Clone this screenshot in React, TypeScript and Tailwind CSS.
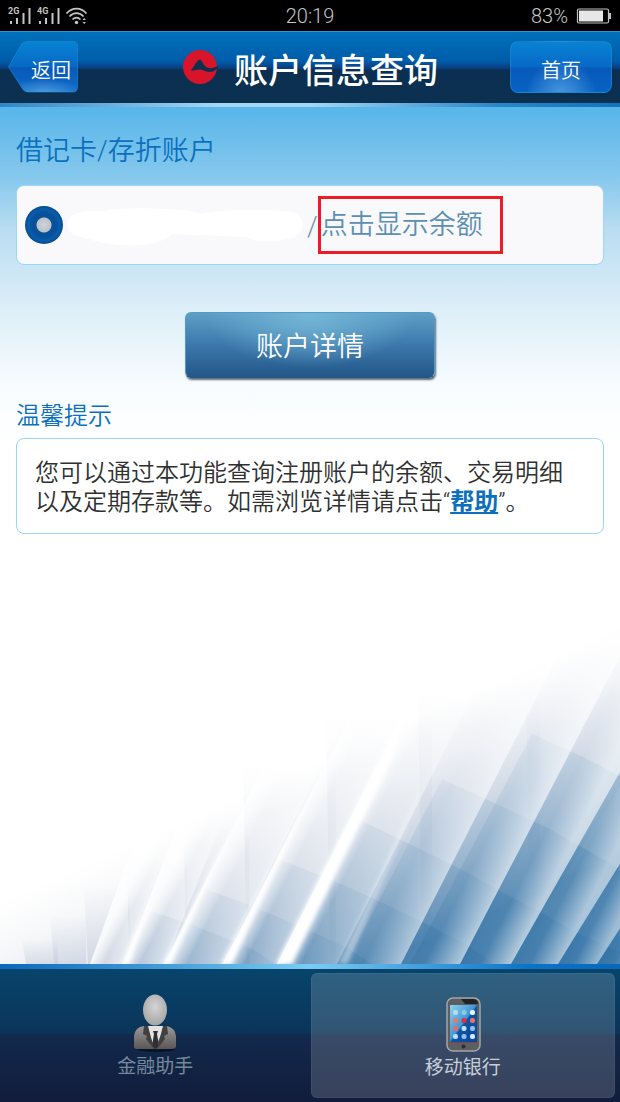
import type { ReactNode } from 'react'

// Slanted strips of the wallpaper: bottom edge x, top edge x/y, opacity of the white fold
const strips = [
    { x: 90, tx: 128, ty: 240, w: 34, fold: 0.6 },
    { x: 123, tx: 170, ty: 227, w: 42, fold: 0.6 },
    { x: 164, tx: 237, ty: 200, w: 58, fold: 0.5 },
    { x: 222, tx: 318, ty: 160, w: 56, fold: 0.45 },
    { x: 277, tx: 399, ty: 103, w: 60, fold: 0.35 },
    { x: 336, tx: 452, ty: 117, w: 65, fold: 0.55 },
    { x: 400, tx: 531, ty: 93, w: 60, fold: 0.6 },
    { x: 459, tx: 602, ty: 93, w: 52, fold: 0.6 },
    { x: 510, tx: 666, ty: 93, w: 48, fold: 0.55 },
    { x: 557, tx: 720, ty: 93, w: 40, fold: 0.5 },
    { x: 597, tx: 760, ty: 93, w: 40, fold: 0.4 },
]

const rows = [
    'M532 115 L581 137 L620 157 V345 H410 Z',
    'M442 160 L490 182 L544 207 L585 230 L620 250 V345 H346 Z',
    'M358 200 L455 247 L502 273 L544 295 L575 313 L620 333 V345 H286 Z',
    'M276 239 L334 262 L370 278 L423 303 L469 327 L494 345 H222 Z',
    'M205 270 L247 285 L287 302 L344 327 L372 345 H166 Z',
    'M144 290 L190 305 L253 330 L275 345 H123 Z',
]

const columns = [
    [26, 320, 58],
    [54, 296, 86],
    [88, 268, 130],
    [130, 236, 187],
    [187, 198, 249],
    [247, 145, 336],
    [330, 95, 432],
    [422, 70, 540],
    [530, 60, 620],
]

function stripPath(s: (typeof strips)[number]) {
    // run the strip past the top of the drawing so that it has no visible cap
    const k = 345 / (345 - s.ty)
    const top = s.x + (s.tx - s.x) * k
    return `M${s.x} 345 L${top} 0 H${top + s.w} L${s.x + s.w} 345 Z`
}

function Wallpaper() {
    return (
        <svg
            className="absolute bottom-0 left-0 w-full"
            viewBox="0 0 620 345"
            aria-hidden="true"
        >
            <defs>
                <linearGradient id="wp-base" gradientUnits="userSpaceOnUse" x1="330" y1="100" x2="520" y2="400">
                    <stop offset="0" stopColor="#cdd2df" />
                    <stop offset="0.4" stopColor="#a9b9d0" />
                    <stop offset="0.7" stopColor="#7fa5c4" />
                    <stop offset="1" stopColor="#4682b2" />
                </linearGradient>
                <linearGradient id="wp-column" x1="0" y1="0" x2="0" y2="1">
                    <stop offset="0" stopColor="#a9b6cc" stopOpacity="0" />
                    <stop offset="1" stopColor="#a9b6cc" stopOpacity="0.35" />
                </linearGradient>
                <linearGradient id="wp-fade" gradientUnits="userSpaceOnUse" x1="390" y1="110" x2="490" y2="335">
                    <stop offset="0" stopColor="#000" />
                    <stop offset="0.2" stopColor="#2c2c2c" />
                    <stop offset="0.45" stopColor="#828282" />
                    <stop offset="0.85" stopColor="#fff" />
                </linearGradient>
                <mask id="wp-mask" maskUnits="userSpaceOnUse" x="0" y="0" width="620" height="345">
                    <rect width="620" height="345" fill="url(#wp-fade)" />
                </mask>
                <filter id="wp-soft" x="-20%" y="-20%" width="140%" height="140%">
                    <feGaussianBlur stdDeviation="2" />
                </filter>
                {strips.map((s, i) => (
                    <linearGradient
                        key={s.x}
                        id={`wp-strip-${i}`}
                        gradientUnits="userSpaceOnUse"
                        x1={s.x}
                        y1="345"
                        x2={s.x + s.w * 0.8}
                        y2={345 + s.w * 0.4}
                    >
                        <stop offset="0" stopColor="#fff" stopOpacity={i < 5 ? 0.8 : 0} />
                        <stop offset="0.4" stopColor="#fff" stopOpacity="0.05" />
                        <stop offset="1" stopColor="#fff" stopOpacity={s.fold} />
                    </linearGradient>
                ))}
            </defs>
            {columns.map(([x, y, right]) => (
                <path key={x} d={`M${x - 4} ${y} H${right} V345 H${x} Z`} fill="url(#wp-column)" />
            ))}
            <g mask="url(#wp-mask)">
                <rect width="620" height="345" fill="url(#wp-base)" />
                {rows.map((d) => (
                    <path key={d} d={d} fill="#2a6da3" fillOpacity="0.3" />
                ))}
            </g>
            {strips.map((s, i) => (
                <path key={s.x} d={stripPath(s)} fill={`url(#wp-strip-${i})`} />
            ))}
            <g fill="#fff" filter="url(#wp-soft)">
                <path d="M122 345 L174 217 L129 345 Z" />
                <path d="M163 345 L243 186 L171 345 Z" />
                <path d="M221 345 L328 140 L232 345 Z" />
                <path d="M276 345 L412 76 L392 140 L292 345 Z" />
                <path d="M338 345 L435 140 L348 345 Z" fillOpacity="0.4" />
            </g>
        </svg>
    )
}

function StatusBar() {
    return (
        <div className="grid h-[31px] grid-cols-[1fr_auto_1fr] items-center bg-black px-2 font-['Roboto',sans-serif] text-xl font-light text-[#c4c4c4]">
            <svg className="h-5 w-20" viewBox="0 0 80 20" aria-hidden="true">
                <g fill="#c4c4c4">
                    <text x="0" y="8" fontSize="9" fontWeight="700">2G</text>
                    <path d="M2 15h2v3h-2zM8 12h2v6h-2zM14.500 7h2v11h-2zM20.500 2h2v16h-2z" />
                    <text x="29" y="8" fontSize="9" fontWeight="700">4G</text>
                    <path d="M31 15h2v3h-2zM37 12h2v6h-2zM43.500 7h2v11h-2zM49.500 2h2v16h-2z" />
                    <circle cx="68.500" cy="16.500" r="1.700" />
                    <path d="M74.500 14l1.700-2 1.700 2zM74.500 16l1.700 2 1.700-2z" />
                </g>
                <g fill="none" stroke="#c4c4c4" strokeWidth="1.700">
                    <path d="M58.500 7.500C64 1 73 1 78.500 7.500" />
                    <path d="M61.500 10.500C65.500 6 71.500 6 75.500 10.500" />
                    <path d="M64.500 13.500C67 11 70 11 72.500 13.500" />
                </g>
            </svg>
            <span>20:19</span>
            <div className="flex items-center justify-end gap-2">
                <span>83%</span>
                <svg className="h-4 w-9" viewBox="0 0 36 16" aria-hidden="true">
                    <rect x="1.500" y="1" width="31" height="14" rx="1.500" fill="none" stroke="#c4c4c4" strokeWidth="1.200" />
                    <rect x="3" y="2.500" width="24" height="11" fill="#e8e6e8" />
                    <path d="M33 5h2v6h-2z" fill="#c4c4c4" />
                </svg>
            </div>
        </div>
    )
}

function BankLogo() {
    return (
        <svg className="h-9 w-9" viewBox="0 0 36 36" aria-hidden="true">
            <circle cx="18" cy="18" r="17" fill="#d7142a" />
            <path
                d="M9 21.500C12 18 14 12 18 10.500C20.500 12 21.500 16.500 24.500 18.200C28 20 32 19 36 17L35 20C32 21.500 31 23.500 27 23C23 22.800 22 20.500 17 20.500C14 20.500 12 22 9 21.500Z"
                fill="#0b3050"
            />
        </svg>
    )
}

function Header() {
    return (
        <header className="bg-[linear-gradient(to_bottom,#6fb6e2_0,#0071bd_1px,#005ca8_40%,#0a3978_50%,#0b2f50_51%,#0b3050_100%)]">
            <div className="grid h-[72px] grid-cols-[1fr_auto_1fr] items-center px-2">
                <button type="button" className="relative h-[52px] w-[70px] pt-2 pl-4 text-xl font-[350] text-white">
                    <svg className="absolute inset-0 h-full w-full" viewBox="0 0 70 52" aria-hidden="true">
                        <defs>
                            <linearGradient id="back-fill" x1="0" y1="0" x2="0" y2="1">
                                <stop offset="0" stopColor="#0783d3" />
                                <stop offset="0.5" stopColor="#0868c6" />
                                <stop offset="0.52" stopColor="#0859b8" />
                                <stop offset="1" stopColor="#0f6cc8" />
                            </linearGradient>
                            <radialGradient id="back-glow" cx="0.5" cy="1.05" r="0.6">
                                <stop offset="0" stopColor="#4d9be0" />
                                <stop offset="1" stopColor="#4d9be0" stopOpacity="0" />
                            </radialGradient>
                        </defs>
                        <path
                            d="M0.500 26L13 4Q15 0.500 19 0.500H65Q69.500 0.500 69.500 5V46Q69.500 51 65 51H20Q16 51 14 47Z"
                            fill="url(#back-fill)"
                            stroke="#1590d8"
                            strokeOpacity="0.6"
                        />
                        <path d="M14 47Q16 51 20 51H65Q69.500 51 69.500 46V27H2Z" fill="url(#back-glow)" />
                    </svg>
                    <span className="relative">返回</span>
                </button>
                <div className="flex items-center gap-4">
                    <BankLogo />
                    <h1 className="pt-2 text-[34px] leading-10 font-medium text-white">账户信息查询</h1>
                </div>
                <button
                    type="button"
                    className="h-[52px] w-[102px] justify-self-end rounded-lg border border-[#1590d8]/60 bg-[radial-gradient(ellipse_at_50%_110%,#4d9be0_0,transparent_50%),linear-gradient(to_bottom,#0783d3_0,#0868c6_50%,#0859b8_52%,#0862c4_100%)] pt-2 text-xl font-[350] text-white shadow"
                >
                    首页
                </button>
            </div>
            <div className="h-1 bg-[linear-gradient(to_right,#2f86c6,#a6d6f4_35%,#a6d6f4_50%,#2a86c8_80%,#1274bd)]" />
        </header>
    )
}

function AssistantIcon() {
    return (
        <svg className="h-[60px] w-12" viewBox="0 0 48 60" aria-hidden="true">
            <defs>
                <radialGradient id="head" cx="0.5" cy="0.4" r="0.6">
                    <stop offset="0" stopColor="#d4d4d4" />
                    <stop offset="1" stopColor="#a5a5a5" />
                </radialGradient>
                <linearGradient id="suit" x1="0" y1="0" x2="0" y2="1">
                    <stop offset="0" stopColor="#9a9a9a" />
                    <stop offset="1" stopColor="#5c5555" />
                </linearGradient>
            </defs>
            <ellipse cx="25" cy="56" rx="19" ry="3" fill="#071528" />
            <path d="M3 54V43Q4 34 13 33H36Q44 35 45 43V54Q44 56 41 56H7Q3 56 3 54Z" fill="url(#suit)" />
            <path d="M15 33L24 55L34 33Z" fill="#e3e3e3" />
            <path d="M22 38H27L26 41L28 53L24.500 56L21 53L23 41Z" fill="#302d35" />
            <path d="M13 33L12 41L16 43L15 46L23 56L17 33ZM36 33L37 41L33 43L34 46L26 56L32 33Z" fill="#414041" />
            <ellipse cx="24" cy="17" rx="12" ry="15.500" fill="url(#head)" />
        </svg>
    )
}

function PhoneIcon() {
    const apps = ['#b5dced', '#8ec8e8', '#eef7fc', '#e57a66', '#e52d3d', '#ec705e', '#e66b62', '#c7dff2', '#91bee6', '#b8dcf2', '#91bee6', '#d6e9f8']
    return (
        <svg className="h-[60px] w-10" viewBox="0 0 40 60" aria-hidden="true">
            <defs>
                <linearGradient id="screen" x1="0" y1="0" x2="1" y2="1">
                    <stop offset="0" stopColor="#8fd0ee" />
                    <stop offset="0.48" stopColor="#3f98d6" />
                    <stop offset="0.52" stopColor="#0b55a7" />
                    <stop offset="1" stopColor="#06459a" />
                </linearGradient>
            </defs>
            <rect x="4" y="4" width="33" height="53" rx="6" fill="#5c5f62" stroke="#a4a5a6" strokeWidth="1.500" />
            <path d="M18 5H31Q35 6 35 10H22Z" fill="#202326" />
            <rect x="7" y="11" width="27" height="37" fill="url(#screen)" />
            {apps.map((color, i) => (
                <rect key={i} x={10 + (i % 3) * 8.5} y={16 + Math.floor(i / 3) * 8} width="5" height="5" rx="2" fill={color} />
            ))}
            <path d="M8 48.500H34" stroke="#9c303e" strokeDasharray="2 1" />
            <circle cx="20.500" cy="52.500" r="2" fill="#292c30" />
        </svg>
    )
}

function Tab({ icon, label, active }: { icon: ReactNode; label: string; active?: boolean }) {
    return (
        <a
            href="#"
            className={
                active
                    ? 'flex flex-1 flex-col items-center rounded-md border border-white/5 bg-white/16 pt-5 text-[#c6cfd9]'
                    : 'flex flex-1 flex-col items-center pt-5 text-[#75899c]'
            }
        >
            {icon}
            <span className="text-[19px] leading-7">{label}</span>
        </a>
    )
}

export default function App() {
    return (
        <div className="flex min-h-screen flex-col bg-white font-['Roboto','Noto_Sans_CJK_SC',sans-serif]" lang="zh-CN">
            <StatusBar />
            <Header />

            <main className="relative flex-1 bg-[linear-gradient(to_bottom,#57b6ea_0,#86c8ed_70px,#b8dcf1_120px,#dceef8_200px,#f8fcfe_280px,#ffffff_340px)] px-4">
                <Wallpaper />
                <div className="relative">
                    <h2 className="pt-[26px] text-[27px] leading-9 font-[350] text-[#0b70bd]">借记卡/存折账户</h2>

                    {/* Account */}
                    <div className="mt-4 flex h-20 items-center rounded-lg border border-[#9bd6fa] bg-[#f9f9fb] pl-2">
                        <input
                            type="radio"
                            name="account"
                            aria-label="账户"
                            defaultChecked
                            className="h-[38px] w-[38px] shrink-0 appearance-none rounded-full bg-[radial-gradient(circle,#d2d5da_0,#b9c1cb_7px,#07509a_8px,#07509a_12px,#0a5dab_16px,#064a8b_19px)]"
                        />
                        <svg className="h-12 w-60 shrink-0" viewBox="0 0 240 48" aria-hidden="true">
                            <path
                                d="M4 23C7 9 24 10 42 10C58 6 100 7 128 10L138 13C160 8 205 8 229 11C243 14 242 31 232 36C212 42 192 42 184 36L108 33C96 48 54 45 36 41C18 35 5 36 4 23Z"
                                fill="#fff"
                            />
                        </svg>
                        <span className="pt-1 pl-1 text-[27px] font-[350] text-[#6a94b4]">/</span>
                        <button
                            type="button"
                            className="h-[58px] w-[185px] border-[3px] border-[#ed1c24] text-left text-[27px] font-[350] whitespace-nowrap text-[#5d8fb4]"
                        >
                            点击显示余额
                        </button>
                    </div>

                    <div className="mt-[47px] flex justify-center">
                        <button
                            type="button"
                            className="h-[66px] w-[250px] rounded-md border border-[#5a9ac2] border-b-[#2a5680] bg-[radial-gradient(ellipse_at_50%_0%,#74b6d6_0,transparent_60%),linear-gradient(to_bottom,#5d9fc6_0,#3c78ac_50%,#235788_100%)] pt-1 text-[27px] font-[350] text-white shadow-[1px_2px_2px_#5b6b7c]"
                        >
                            账户详情
                        </button>
                    </div>

                    {/* Tips */}
                    <h3 className="mt-5 text-2xl leading-9 font-[350] text-[#0b70bd]">温馨提示</h3>
                    <div className="mt-1 rounded-lg border border-[#9bd6fa] bg-white px-[18px] pt-5 pb-4">
                        <p className="text-2xl leading-[29px] font-[350] text-[#303030]">
                            您可以通过本功能查询注册账户的余额、交易明细以及定期存款等。如需浏览详情请点击“
                            <a href="#" className="font-bold text-[#0b70bd] underline">
                                帮助
                            </a>
                            ”。
                        </p>
                    </div>
                </div>
            </main>

            <footer>
                <div className="h-[5px] bg-[linear-gradient(to_right,#0868ba,#7accf3_50%,#0b74c8_85%,#0868ba)]" />
                <nav className="flex h-[133px] gap-1 bg-[linear-gradient(to_bottom,#07446b_0,#0b3459_48%,#11294b_50%,#121c3c_100%)] py-1 pr-[5px] pl-1">
                    <Tab icon={<AssistantIcon />} label="金融助手" />
                    <Tab icon={<PhoneIcon />} label="移动银行" active />
                </nav>
            </footer>
        </div>
    )
}
